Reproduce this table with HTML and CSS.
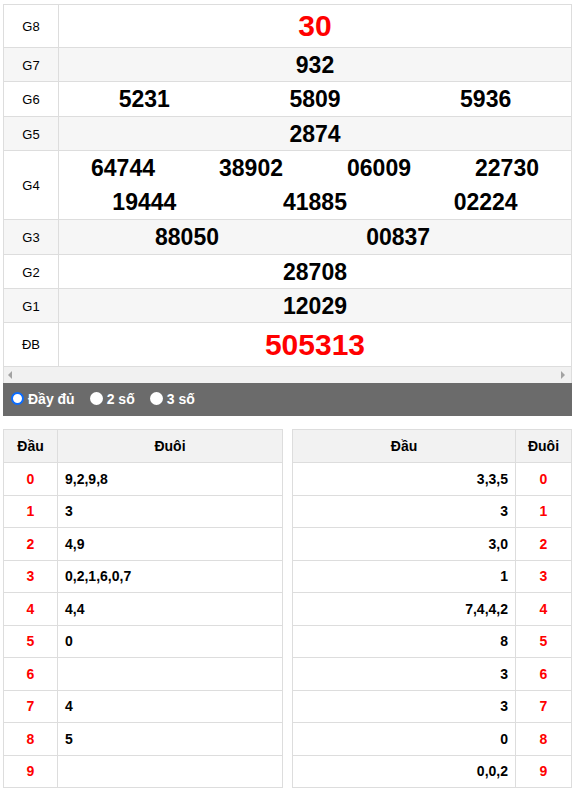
FILE: index.html
```html
<!DOCTYPE html>
<html lang="vi">
<head>
<meta charset="utf-8">
<link rel="stylesheet" href="styles.css">
</head>
<body>
<div class="page">
  <div class="results">
    <div class="row h42"><div class="lbl">G8</div><div class="val big red">30</div></div>
    <div class="row alt h33"><div class="lbl">G7</div><div class="val">932</div></div>
    <div class="row h34"><div class="lbl">G6</div><div class="val g3c"><span>5231</span><span>5809</span><span>5936</span></div></div>
    <div class="row alt h33"><div class="lbl">G5</div><div class="val">2874</div></div>
    <div class="row h68"><div class="lbl">G4</div><div class="val stack"><div class="g4c"><span>64744</span><span>38902</span><span>06009</span><span>22730</span></div><div class="g3c"><span>19444</span><span>41885</span><span>02224</span></div></div></div>
    <div class="row alt h34"><div class="lbl">G3</div><div class="val g2c"><span>88050</span><span>00837</span><span></span></div></div>
    <div class="row h33"><div class="lbl">G2</div><div class="val">28708</div></div>
    <div class="row alt h33"><div class="lbl">G1</div><div class="val">12029</div></div>
    <div class="row h43 last"><div class="lbl">ĐB</div><div class="val big red">505313</div></div>
    <div class="scrollbar"><span class="arr left"></span><span class="arr right"></span></div>
  </div>
  <div class="modebar">
    <label class="opt"><span class="radio checked"></span>Đầy đủ</label>
    <label class="opt"><span class="radio"></span>2 số</label>
    <label class="opt"><span class="radio"></span>3 số</label>
  </div>
  <div class="loto">
    <div class="ltable left">
      <div class="lrow head"><div class="c1">Đầu</div><div class="c2">Đuôi</div></div>
      <div class="lrow"><div class="c1 red">0</div><div class="c2">9,2,9,8</div></div>
      <div class="lrow"><div class="c1 red">1</div><div class="c2">3</div></div>
      <div class="lrow"><div class="c1 red">2</div><div class="c2">4,9</div></div>
      <div class="lrow"><div class="c1 red">3</div><div class="c2">0,2,1,6,0,7</div></div>
      <div class="lrow"><div class="c1 red">4</div><div class="c2">4,4</div></div>
      <div class="lrow"><div class="c1 red">5</div><div class="c2">0</div></div>
      <div class="lrow"><div class="c1 red">6</div><div class="c2"></div></div>
      <div class="lrow"><div class="c1 red">7</div><div class="c2">4</div></div>
      <div class="lrow"><div class="c1 red">8</div><div class="c2">5</div></div>
      <div class="lrow"><div class="c1 red">9</div><div class="c2"></div></div>
    </div>
    <div class="ltable right">
      <div class="lrow head"><div class="c1">Đầu</div><div class="c2">Đuôi</div></div>
      <div class="lrow"><div class="c1">3,3,5</div><div class="c2 red">0</div></div>
      <div class="lrow"><div class="c1">3</div><div class="c2 red">1</div></div>
      <div class="lrow"><div class="c1">3,0</div><div class="c2 red">2</div></div>
      <div class="lrow"><div class="c1">1</div><div class="c2 red">3</div></div>
      <div class="lrow"><div class="c1">7,4,4,2</div><div class="c2 red">4</div></div>
      <div class="lrow"><div class="c1">8</div><div class="c2 red">5</div></div>
      <div class="lrow"><div class="c1">3</div><div class="c2 red">6</div></div>
      <div class="lrow"><div class="c1">3</div><div class="c2 red">7</div></div>
      <div class="lrow"><div class="c1">0</div><div class="c2 red">8</div></div>
      <div class="lrow"><div class="c1">0,0,2</div><div class="c2 red">9</div></div>
    </div>
  </div>
</div>
</body>
</html>
```

FILE: styles.css
```css
* { box-sizing: border-box; }
html, body { margin: 0; padding: 0; background: #fff; }
body { font-family: "Liberation Sans", Arial, sans-serif; font-size: 13px; color: #000; }
.page { padding: 4px 3px 0 3px; width: 575px; }

.results { border: 1px solid #ddd; border-bottom: none; width: 569px; }
.row { display: grid; grid-template-columns: 55px 1fr; border-bottom: 1px solid #ddd; }
.row.alt { background: #f6f6f6; }
.h42 { height: 43px; }
.h33 { height: 34px; }
.h34 { height: 35px; }
.h68 { height: 69px; }
.h43 { height: 44px; }
.lbl { border-right: 1px solid #ddd; display: flex; align-items: center; justify-content: center; font-size: 13px; }
.val { display: flex; align-items: center; justify-content: center; font-weight: bold; font-size: 23px; line-height: 34px; }
.val.big { font-size: 30px; }
.red { color: #f00; }
.val.stack { flex-direction: column; align-items: stretch; }
.g3c, .g4c, .g2c { display: grid; text-align: center; }
.g3c { grid-template-columns: 1fr 1fr 1fr; }
.g4c { grid-template-columns: 1fr 1fr 1fr 1fr; }
.g2c { grid-template-columns: 50% 32.5% 1fr; }
.val.g3c, .val.g2c { align-items: center; }

.scrollbar { height: 16px; background: #f1f1f1; position: relative; }
.arr { position: absolute; top: 4px; width: 0; height: 0; border-top: 4px solid transparent; border-bottom: 4px solid transparent; }
.arr.left { left: 4px; border-right: 4px solid #a3a3a3; }
.arr.right { right: 6px; border-left: 4px solid #a3a3a3; }

.modebar { width: 569px; height: 33px; background: #6b6b6b; display: flex; align-items: center; padding-left: 8px; padding-bottom: 2px; }
.opt { display: flex; align-items: center; color: #fff; font-weight: bold; font-size: 14px; margin-right: 15px; }
.radio { width: 13px; height: 13px; border-radius: 50%; background: #fff; margin-right: 4px; display: inline-block; }
.radio.checked { border: 2px solid #0a6cff; background: #fff; }

.loto { display: flex; justify-content: space-between; margin-top: 13px; width: 569px; }
.ltable { width: 280px; border: 1px solid #ddd; border-bottom: none; }
.lrow { display: grid; height: 32.5px; border-bottom: 1px solid #ddd; font-weight: bold; font-size: 14px; }
.lrow.head { height: 33px; background: #f2f2f2; }
.left .lrow { grid-template-columns: 54px 1fr; }
.right .lrow { grid-template-columns: 1fr 55px; }
.lrow > div { display: flex; align-items: center; }
.left .c1 { justify-content: center; border-right: 1px solid #ddd; }
.left .c2 { padding-left: 7px; }
.left .head .c2 { justify-content: center; padding-left: 0; }
.right .c1 { justify-content: flex-end; padding-right: 7px; border-right: 1px solid #ddd; }
.right .c2 { justify-content: center; }
.right .head .c1 { justify-content: center; padding-right: 0; }
```
